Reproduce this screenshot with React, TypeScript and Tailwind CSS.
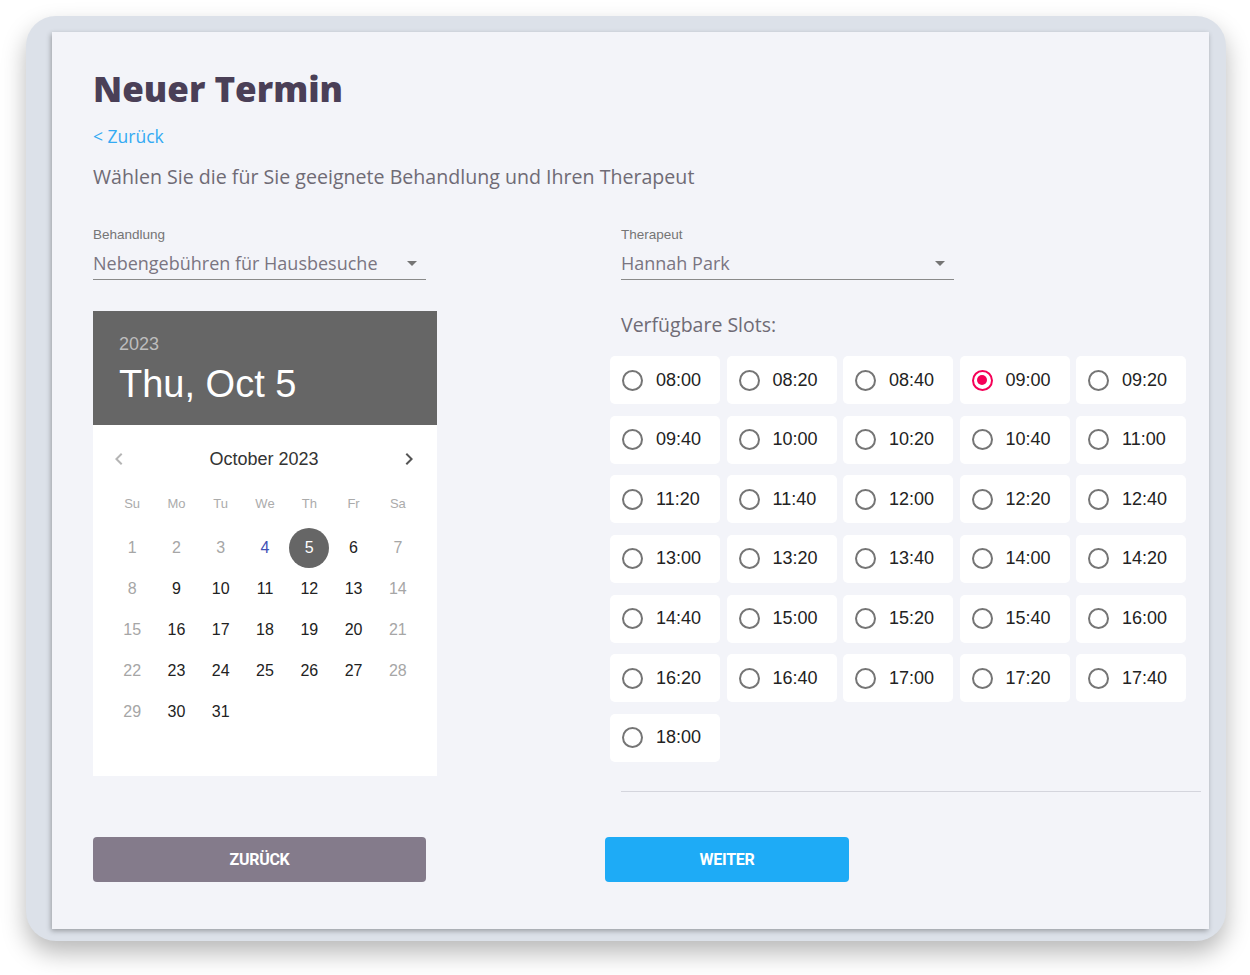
import { useState } from 'react'

const slots = [
  '08:00', '08:20', '08:40', '09:00', '09:20',
  '09:40', '10:00', '10:20', '10:40', '11:00',
  '11:20', '11:40', '12:00', '12:20', '12:40',
  '13:00', '13:20', '13:40', '14:00', '14:20',
  '14:40', '15:00', '15:20', '15:40', '16:00',
  '16:20', '16:40', '17:00', '17:20', '17:40',
  '18:00',
]

const weekDays = ['Su', 'Mo', 'Tu', 'We', 'Th', 'Fr', 'Sa']

// October 2023 starts on a Sunday
const days = Array.from({ length: 31 }, (_, i) => i + 1)

const segoe = "font-['Open_Sans',sans-serif]"
const arial = "font-['Liberation_Sans',Arial,sans-serif]"

function Caret() {
  return (
    <svg width="24" height="24" viewBox="0 0 24 24" className="fill-[#757575]">
      <path d="M7 10l5 5 5-5z" />
    </svg>
  )
}

function Chevron({ dir, className }: { dir: 'left' | 'right'; className: string }) {
  return (
    <svg width="24" height="24" viewBox="0 0 24 24" className={className}>
      {dir === 'left' ? (
        <path d="M15.41 7.41L14 6l-6 6 6 6 1.41-1.41L10.83 12z" />
      ) : (
        <path d="M8.59 16.59L13.17 12 8.59 7.41 10 6l6 6-6 6z" />
      )}
    </svg>
  )
}

function SelectField({ label, value }: { label: string; value: string }) {
  return (
    <div className="w-[333px]">
      <div className={`${arial} text-[13.5px] leading-[16px] text-[#757575]`}>{label}</div>
      <div className="flex items-center justify-between border-b border-[#8a8a8a] pt-[8px] pb-[4px]">
        <span className={`${segoe} text-[18px] leading-[24px] text-[#7a7581]`}>{value}</span>
        <span className="mr-[2px]">
          <Caret />
        </span>
      </div>
    </div>
  )
}

function dayColor(d: number) {
  const dow = (d - 1) % 7
  if (d === 4) return 'text-[#3f51b5]'
  if (d < 4 || dow === 0 || dow === 6) return 'text-[#a6a6a6]'
  return 'text-[#222]'
}

function Calendar() {
  return (
    <div className={`${arial} w-[344px]`}>
      <div className="h-[114px] bg-[#666666] pl-[26px] pt-[22px]">
        <div className="text-[18px] leading-[22px] text-[#bdbdbd]">2023</div>
        <div className="mt-[7px] text-[38px] leading-[44px] text-white">Thu, Oct 5</div>
      </div>
      <div className="h-[351px] bg-white pt-[22px]">
        <div className="flex items-center justify-between pl-[14px] pr-[16px]">
          <Chevron dir="left" className="fill-[#b5b5b5]" />
          <span className="text-[18px] leading-[24px] text-[#333]">October 2023</span>
          <Chevron dir="right" className="fill-[#555]" />
        </div>
        <div className="mx-auto mt-[23px] grid w-[310px] grid-cols-7">
          {weekDays.map((w) => (
            <div key={w} className="text-center text-[13px] leading-[20px] text-[#ababab]">
              {w}
            </div>
          ))}
        </div>
        <div className="mx-auto mt-[13px] grid w-[310px] grid-cols-7">
          {days.map((d) =>
            d === 5 ? (
              <div key={d} className="flex h-[41px] items-center justify-center">
                <span className="flex h-[40px] w-[40px] items-center justify-center rounded-full bg-[#666666] text-[16px] font-medium text-white">
                  5
                </span>
              </div>
            ) : (
              <div
                key={d}
                className={`flex h-[41px] items-center justify-center text-[16px] ${dayColor(d)}`}
              >
                {d}
              </div>
            ),
          )}
        </div>
      </div>
    </div>
  )
}

function Slot({ time, checked, onPick }: { time: string; checked: boolean; onPick: () => void }) {
  return (
    <button
      onClick={onPick}
      className="flex h-[48px] items-center gap-[13px] rounded-[5px] bg-white pl-[12px] text-left"
    >
      <span
        className={`flex h-[21px] w-[21px] items-center justify-center rounded-full border-2 ${
          checked ? 'border-[#f50057]' : 'border-[#757575]'
        }`}
      >
        {checked && <span className="h-[10px] w-[10px] rounded-full bg-[#f50057]" />}
      </span>
      <span className={`${arial} text-[18px] text-[#222]`}>{time}</span>
    </button>
  )
}

export default function App() {
  const [picked, setPicked] = useState('09:00')

  return (
    <div className="h-[975px] w-[1250px] bg-white pl-[26px] pt-[16px]">
      <div className="h-[925px] w-[1200px] rounded-[30px] bg-[#dce1e9] pl-[26px] pt-[16px] shadow-[0_12px_24px_rgba(0,0,0,0.28)]">
        <div className="h-[897px] w-[1157px] bg-[#f3f4f9] pl-[41px] pt-[35px] shadow-[-1px_2px_5px_rgba(0,0,0,0.3)]">
          <h1 className={`${segoe} text-[35px] font-extrabold leading-[44px] text-[#4a3f57]`}>
            Neuer Termin
          </h1>
          <a href="#" className={`${segoe} mt-[13px] block text-[17.5px] leading-[24px] text-[#33aaf3]`}>
            &lt; Zurück
          </a>
          <p className={`${segoe} mt-[15px] text-[19.6px] leading-[28px] text-[#6f6b75]`}>
            Wählen Sie die für Sie geeignete Behandlung und Ihren Therapeut
          </p>

          <div className="mt-[36px] flex">
            <div className="w-[528px]">
              <SelectField label="Behandlung" value="Nebengebühren für Hausbesuche" />
              <div className="mt-[31px]">
                <Calendar />
              </div>
            </div>

            <div>
              <SelectField label="Therapeut" value="Hannah Park" />
              <div className={`${segoe} mt-[31px] text-[19.5px] leading-[28px] text-[#6f6b75]`}>
                Verfügbare Slots:
              </div>
              <div className="-ml-[11px] mt-[17px] grid grid-cols-[repeat(5,110px)] gap-x-[6.5px] gap-y-[11.67px]">
                {slots.map((t) => (
                  <Slot key={t} time={t} checked={picked === t} onPick={() => setPicked(t)} />
                ))}
              </div>
              <div className="mt-[29px] h-[1.5px] w-[580px] bg-[#d4d5dd]" />
            </div>
          </div>

          <div className="mt-[45px] flex">
            <button className="h-[45px] w-[333px] rounded-[4px] bg-[#847b8b] font-['Roboto',sans-serif] text-[16px] font-bold tracking-[-0.3px] text-white">
              ZURÜCK
            </button>
            <button className="ml-[179px] h-[45px] w-[244px] rounded-[4px] bg-[#1eabf6] font-['Roboto',sans-serif] text-[16px] font-bold tracking-[-0.3px] text-white">
              WEITER
            </button>
          </div>
        </div>
      </div>
    </div>
  )
}
